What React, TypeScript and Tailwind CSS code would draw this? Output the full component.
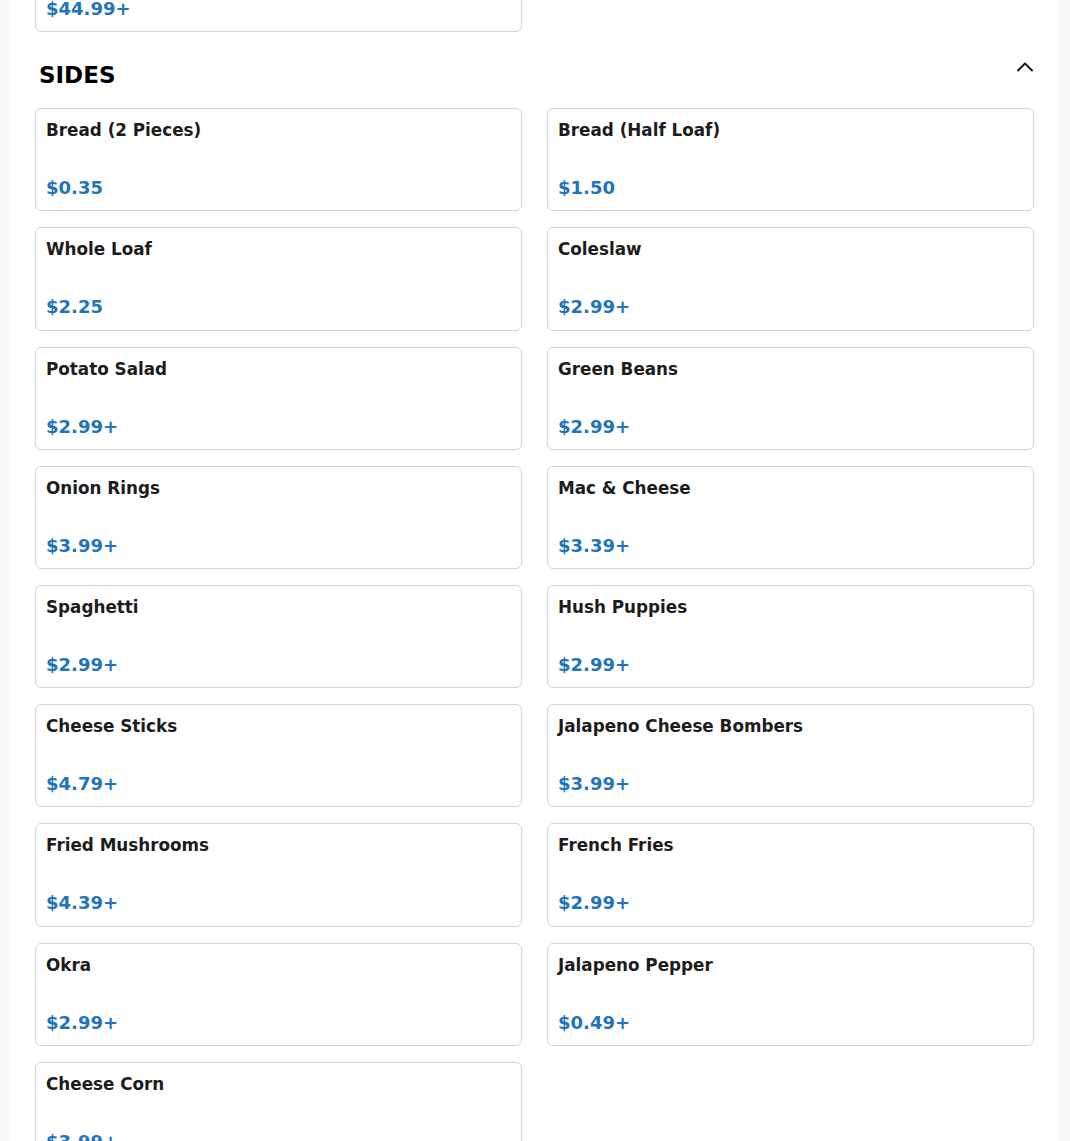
import React from "react";

type Item = { name: string; price: string };

const sides: Item[] = [
  { name: "Bread (2 Pieces)", price: "$0.35" },
  { name: "Bread (Half Loaf)", price: "$1.50" },
  { name: "Whole Loaf", price: "$2.25" },
  { name: "Coleslaw", price: "$2.99+" },
  { name: "Potato Salad", price: "$2.99+" },
  { name: "Green Beans", price: "$2.99+" },
  { name: "Onion Rings", price: "$3.99+" },
  { name: "Mac & Cheese", price: "$3.39+" },
  { name: "Spaghetti", price: "$2.99+" },
  { name: "Hush Puppies", price: "$2.99+" },
  { name: "Cheese Sticks", price: "$4.79+" },
  { name: "Jalapeno Cheese Bombers", price: "$3.99+" },
  { name: "Fried Mushrooms", price: "$4.39+" },
  { name: "French Fries", price: "$2.99+" },
  { name: "Okra", price: "$2.99+" },
  { name: "Jalapeno Pepper", price: "$0.49+" },
  { name: "Cheese Corn", price: "$3.99+" },
];

function MenuCard({ item }: { item: Item }) {
  return (
    <div className="h-[103.2px] rounded-md border border-[#d4d4d4] bg-white px-[10px] pt-[11px]">
      <div className="h-[20px] text-[16.8px] font-bold leading-[20px] text-[#1c1c1c]">{item.name}</div>
      <div className="mt-[38px] text-[18px] font-bold leading-[20px] text-[#1f74bc]">{item.price}</div>
    </div>
  );
}

export default function App() {
  return (
    <div className="min-h-[1141px] overflow-hidden bg-[#f8f8f9] font-['DejaVu_Sans',sans-serif]">
      <div className="ml-[10px] mr-[11px] h-[1141px] overflow-hidden bg-white px-[25px]">
        {/* tail of the previous section */}
        <div className="-mt-[71px] grid grid-cols-2 gap-x-[25px]">
          <MenuCard item={{ name: "", price: "$44.99+" }} />
        </div>

        <section className="mt-[27px]">
          <div className="flex items-start justify-between">
            <h2 className="pl-[4px] text-[23px] font-bold leading-[32px] text-black">SIDES</h2>
            <button type="button" className="mr-px mt-[3px] p-0" aria-label="Collapse">
              <svg width="16" height="10" viewBox="0 0 16 10" fill="none">
                <path d="M1 8.5 8 1.5l7 7" stroke="#111" strokeWidth="1.8" strokeLinecap="round" strokeLinejoin="round" />
              </svg>
            </button>
          </div>
          <div className="mt-[17px] grid grid-cols-2 gap-x-[25px] gap-y-4">
            {sides.map((s) => (
              <MenuCard key={s.name} item={s} />
            ))}
          </div>
        </section>
      </div>
    </div>
  );
}
